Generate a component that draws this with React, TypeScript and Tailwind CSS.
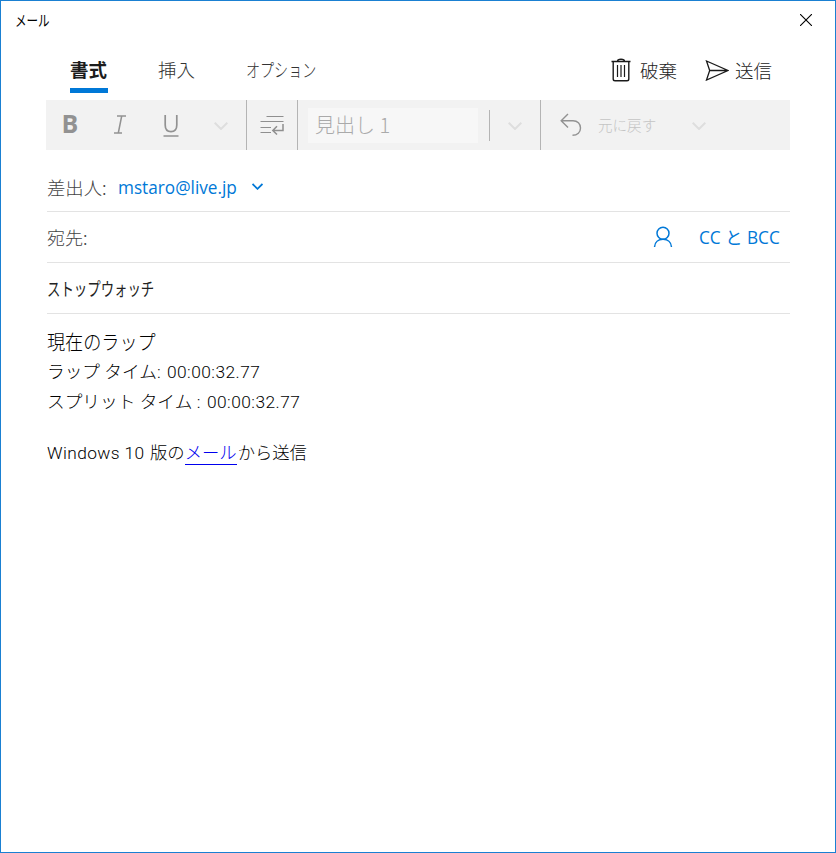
import React from 'react';

const SANS = "font-['Open_Sans','Noto_Sans_CJK_JP',sans-serif]";
const JP = "font-['Noto_Sans_CJK_JP',sans-serif]";
const BODY = "font-['Roboto','Noto_Sans_CJK_JP',sans-serif]";

interface TabProps {
  label: string;
  className: string;
  labelClass?: string;
  active?: boolean;
}

const Tab: React.FC<TabProps> = ({ label, className, labelClass = '', active }) => (
  <button
    className={`h-[53px] pb-[5px] text-left text-[18.5px] leading-[28px] whitespace-nowrap border-b-[5px] flex items-end ${
      active ? 'border-[#0078d7] font-bold text-[#1c1c1c]' : 'border-transparent font-light text-[#333]'
    } ${className}`}
  >
    <span className={`inline-block origin-left ${labelClass}`}>{label}</span>
  </button>
);

const Chevron: React.FC<{ className: string }> = ({ className }) => (
  <svg viewBox="0 0 14 8" className={`shrink-0 ${className}`} fill="none" stroke="currentColor">
    <path d="M0.7 0.8L7 7L13.3 0.8" />
  </svg>
);

const CloseIcon: React.FC = () => (
  <svg viewBox="0 0 12 12" className="w-3 h-3" fill="none" stroke="#000" strokeWidth="1.1">
    <path d="M0 0L12 12M12 0L0 12" />
  </svg>
);

const TrashIcon: React.FC = () => (
  <svg viewBox="0 0 20 24" className="w-5 h-6" fill="none" stroke="#1a1a1a" strokeWidth="1.4">
    <path d="M0.5 3.5H19.5M6.5 3.2C6.5 0.6 13.5 0.6 13.5 3.2" />
    <path d="M2.2 3.5V21Q2.2 22.8 4 22.8H16Q17.8 22.8 17.8 21V3.5" />
    <path d="M6.5 7V19M10 7V19M13.5 7V19" strokeWidth="1.2" />
  </svg>
);

const SendIcon: React.FC = () => (
  <svg viewBox="0 0 24 21" className="w-6 h-[21px]" fill="none" stroke="#1a1a1a" strokeWidth="1.3">
    <path d="M1.5 1L23 10.5L1.5 20L4.7 10.5ZM4.7 10.5H22" />
  </svg>
);

const ParagraphIcon: React.FC = () => (
  <svg viewBox="0 0 24 20" className="w-6 h-5" fill="none" stroke="#8f8f8f" strokeWidth="1.2">
    <path d="M6.5 1.5H23.5M0.5 6.5H23.5M0.5 12.5H11M0.5 17.5H11" />
    <path d="M23 9V15.5H13M17 11.2L12.8 15.5L17 19.5" strokeWidth="1.5" />
  </svg>
);

const UndoIcon: React.FC = () => (
  <svg viewBox="0 0 22 24" className="w-[22px] h-6" fill="none" stroke="#929292" strokeWidth="1.4">
    <path d="M8 1L1.2 7.7L8 14.4M1.2 7.7H13C17.5 7.7 20.5 11 20.5 15C20.5 19 17.5 22.3 12.5 22.3" />
  </svg>
);

const PersonIcon: React.FC = () => (
  <svg viewBox="0 0 20 22" className="w-5 h-[22px]" fill="none" stroke="#0078d7" strokeWidth="1.5">
    <circle cx="10" cy="7.3" r="6" />
    <path d="M1.5 21C1.8 16.2 5.4 13.3 10 13.3S18.2 16.2 18.5 21" />
  </svg>
);

const TitleBar: React.FC = () => (
  <header className="h-[39px] flex items-center justify-between pl-[14px] pr-[23px] pb-px">
    <h1 className="origin-left scale-x-[0.77] text-[15px] leading-5 text-black">メール</h1>
    <button aria-label="閉じる">
      <CloseIcon />
    </button>
  </header>
);

const CommandBar: React.FC = () => (
  <div className="h-[60px] flex">
    <nav className="flex pl-6">
      <Tab label="書式" className="w-[38px]" active />
      <Tab label="挿入" className="w-[38px] ml-[50px]" />
      <Tab label="オプション" className="w-[72px] ml-[50px]" labelClass="scale-x-[0.76]" />
    </nav>
    <div className="ml-auto mr-[18px] h-[60px] flex items-center font-light text-[18.5px] text-[#1a1a1a]">
      <button className="flex items-center gap-[9px]">
        <TrashIcon />
        <span className="leading-[28px]">破棄</span>
      </button>
      <button className="flex items-center gap-[6px] ml-[28px]">
        <SendIcon />
        <span className="leading-[28px]">送信</span>
      </button>
    </div>
  </div>
);

const FormatToolbar: React.FC = () => (
  <div className="h-[50px] w-[744px] flex bg-[#f2f2f2] text-[#929292]">
    <div className="w-[201px] flex items-center border-r border-[#b4b4b4]">
      <span className={`w-[48px] pb-[3px] text-center text-[25px] leading-[47px] font-bold ${SANS}`}>B</span>
      <span className="w-[52px] pb-[2px] flex justify-center">
        <svg viewBox="0 0 14 19" className="w-[14px] h-[19px]" fill="none" stroke="currentColor" strokeWidth="1.5">
          <path d="M4 1H13M1 18H9M8.7 1L5.3 18" />
        </svg>
      </span>
      <span className="w-[49px] flex justify-center">
        <svg viewBox="0 0 16 23" className="w-4 h-[23px]" fill="none" stroke="currentColor" strokeWidth="1.7">
          <path d="M2.2 1V11Q2.2 17.6 8 17.6Q13.8 17.6 13.8 11V1M0.5 22H15.5" />
        </svg>
      </span>
      <Chevron className="ml-[19px] mt-[2px] w-[14px] h-2 text-[#dedede] stroke-2" />
    </div>
    <div className="w-[51px] flex items-center justify-center border-r border-[#b4b4b4]">
      <ParagraphIcon />
    </div>
    <div className="w-[243px] flex items-center border-r border-[#b4b4b4]">
      <div className="ml-[10px] w-[170px] h-[35px] pl-[7px] bg-[#f7f7f7] text-[20px] leading-[33px] font-light text-[#aaa]">
        見出し 1
      </div>
      <span className="ml-[11px] w-px h-[31px] bg-[#b4b4b4]" />
      <Chevron className="ml-[18px] mt-[2px] w-[14px] h-2 text-[#dedede] stroke-2" />
    </div>
    <div className="flex items-center pl-[19px]">
      <UndoIcon />
      <span className="ml-4 w-[59px] text-[15px] leading-[50px] font-light text-[#c4c4c4] whitespace-nowrap">
        <span className="inline-block origin-left scale-x-[0.97]">元に戻す</span>
      </span>
      <Chevron className="ml-[35px] mt-[2px] w-[14px] h-2 text-[#dedede] stroke-2" />
    </div>
  </div>
);

const AddressFields: React.FC = () => (
  <div className="ml-px w-[743px]">
    <div className="h-[62px] pt-[13px] flex items-center border-b border-[#e3e3e3]">
      <span className="w-[71px] text-[18px] font-light text-[#444] whitespace-nowrap">
        <span className="inline-block origin-left scale-x-[1.02]">差出人:</span>
      </span>
      <span className={`w-[120px] text-[18px] text-[#0078d7] ${SANS}`}>
        <span className="inline-block origin-left scale-x-[0.955]">mstaro@live.jp</span>
      </span>
      <Chevron className="ml-[14px] mb-[2px] w-[11px] h-[7px] text-[#0078d7] stroke-[2.2]" />
    </div>
    <div className="h-[51px] flex items-center border-b border-[#e3e3e3]">
      <span className="text-[18px] font-light text-[#444]">宛先:</span>
      <button aria-label="連絡先" className="ml-auto">
        <PersonIcon />
      </button>
      <button className={`ml-[26px] w-[91px] text-left text-[17.5px] text-[#0078d7] whitespace-nowrap ${SANS}`}>
        <span className="inline-block origin-left scale-x-[0.985]">CC と BCC</span>
      </button>
    </div>
    <div className="h-[51px] flex items-center border-b border-[#e3e3e3]">
      <span className="inline-block origin-left scale-x-[0.745] text-[18px] leading-[27px] text-[#222]">
        ストップウォッチ
      </span>
    </div>
  </div>
);

const MessageBody: React.FC = () => (
  <main className={`ml-px pt-[12px] text-black whitespace-nowrap ${BODY}`}>
    <h2 className={`text-[20px] leading-[32px] font-light ${JP}`}>
      <span className="inline-block origin-left scale-x-[0.905]">現在のラップ</span>
    </h2>
    <p className="-mt-px text-[17.33px] leading-[30px] font-light">
      <span className="inline-block w-[120px] origin-left"><span className="inline-block origin-left scale-x-[1.02]">ラップ タイム:</span></span>
      <span className="inline-block tracking-[0.45px]">00:00:32.77</span>
    </p>
    <p className="text-[17.33px] leading-[30px] font-light">
      <span className="inline-block w-[160px]"><span className="inline-block origin-left scale-x-[1.02]">スプリット タイム :</span></span>
      <span className="inline-block tracking-[0.45px]">00:00:32.77</span>
    </p>
    <p className="mt-[21px] text-[17.33px] leading-[30px] font-light">
      <span className="inline-block w-[103px] tracking-[0.4px]">Windows 10</span>
      版の
      <a href="#" className="inline-block leading-[21px] border-b border-[#0000ee] text-[#0000ee]">メール</a>
      <span className="ml-px">から送信</span>
    </p>
  </main>
);

export default function App() {
  return (
    <div className={`w-[836px] h-[853px] overflow-hidden bg-white border border-[#1a80d2] ${JP}`}>
      <TitleBar />
      <div className="px-[45px]">
        <div className="w-[744px]">
          <CommandBar />
          <FormatToolbar />
          <AddressFields />
          <MessageBody />
        </div>
      </div>
    </div>
  );
}
